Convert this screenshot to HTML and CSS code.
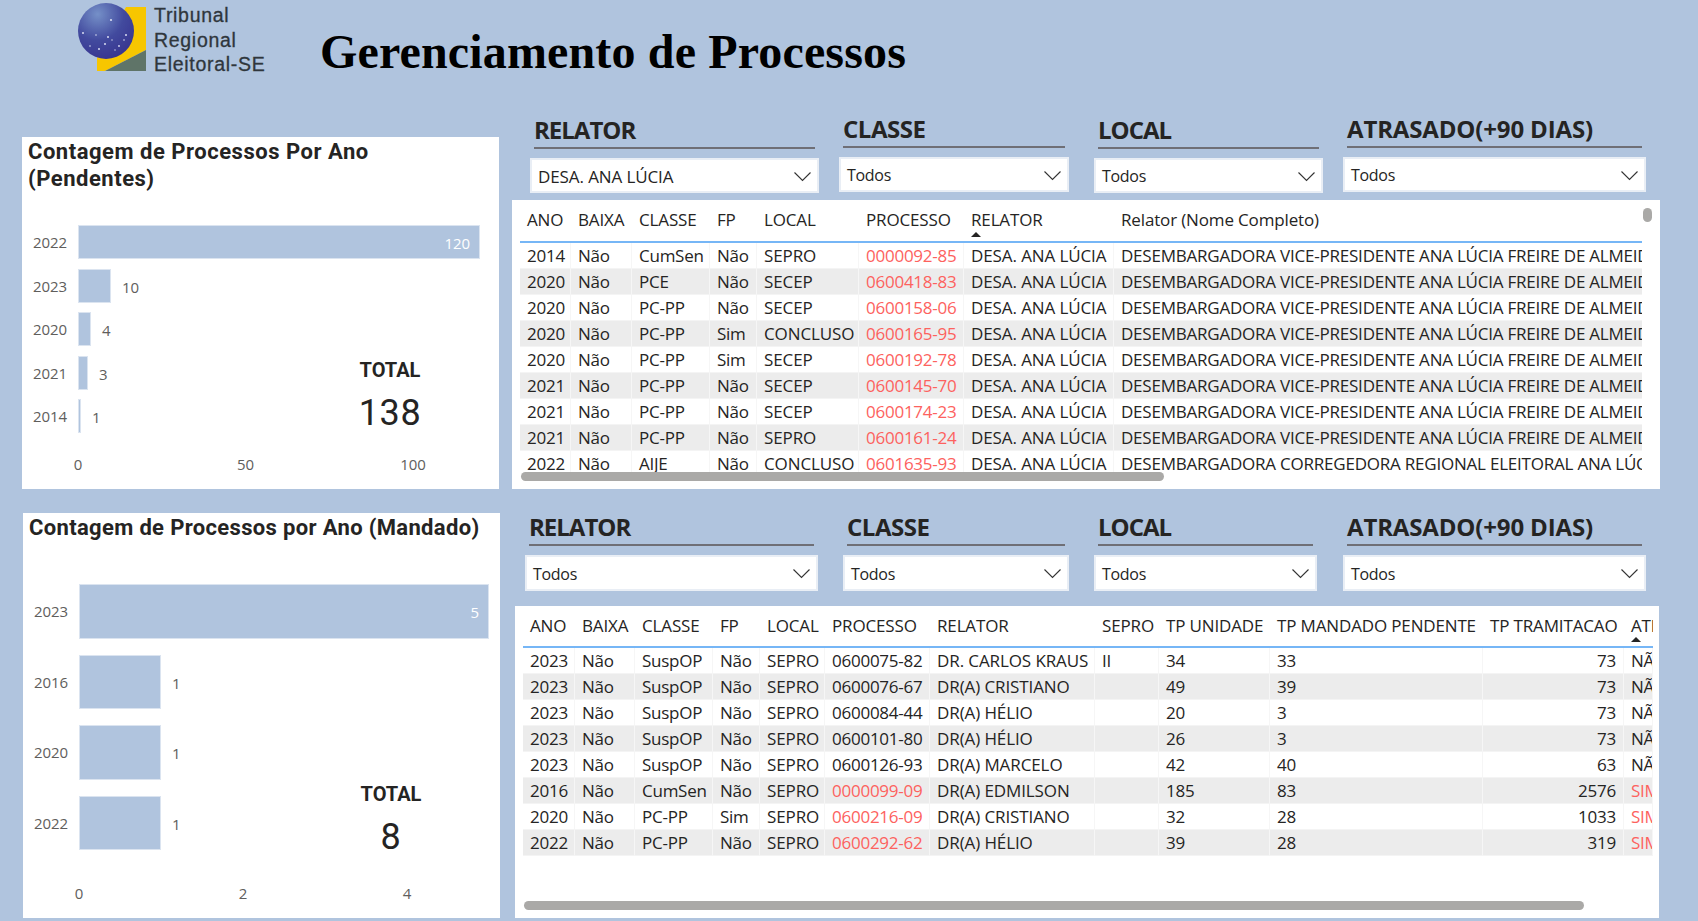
FILE: index.html
```html
<!DOCTYPE html>
<html lang="pt-BR">
<head>
<meta charset="utf-8">
<title>Gerenciamento de Processos</title>
<link rel="stylesheet" href="styles.css">
</head>
<body>
<header class="top">
  <svg class="logo-mark" viewBox="0 0 68 72" width="68" height="72" aria-hidden="true">
    <defs>
      <radialGradient id="globe" cx="0.35" cy="0.2" r="0.85">
        <stop offset="0" stop-color="#7590c8"/>
        <stop offset="0.55" stop-color="#424a9e"/>
        <stop offset="1" stop-color="#37348f"/>
      </radialGradient>
    </defs>
    <polygon points="48,7 68,7 68,50 27,71 19,71 19,58" fill="#f7c600"/>
    <polygon points="68,50 68,71 27,71" fill="#5f7468"/>
    <circle cx="28" cy="31" r="28" fill="url(#globe)"/>
    <g fill="#d9dcf2">
      <circle cx="33" cy="20" r="1.1"/><circle cx="5" cy="33" r="1"/><circle cx="18" cy="35" r="0.8"/>
      <circle cx="30" cy="37" r="1"/><circle cx="27" cy="44" r="1"/><circle cx="41" cy="46" r="0.9"/>
      <circle cx="48" cy="35" r="1"/><circle cx="46" cy="40" r="0.8"/><circle cx="21" cy="49" r="1"/>
      <circle cx="12" cy="46" r="0.8"/><circle cx="37" cy="50" r="0.7"/><circle cx="34" cy="40" r="0.7"/>
    </g>
  </svg>
  <div class="logo-text"><span>Tribunal</span><span>Regional</span><span>Eleitoral-SE</span></div>
  <h1 class="title">Gerenciamento de Processos</h1>
</header>

<main class="dash">
  <section class="chart chart-a">
    <h2 class="chart-title title-a">Contagem de Processos Por Ano (Pendentes)</h2>
    <div class="bars bars-a">
      <div class="bar-row"><span class="year">2022</span><div class="bar" style="width:402px"><span class="val-in">120</span></div></div>
      <div class="bar-row"><span class="year">2023</span><div class="bar" style="width:33px"></div><span class="val">10</span></div>
      <div class="bar-row"><span class="year">2020</span><div class="bar" style="width:13px"></div><span class="val">4</span></div>
      <div class="bar-row"><span class="year">2021</span><div class="bar" style="width:10px"></div><span class="val">3</span></div>
      <div class="bar-row"><span class="year">2014</span><div class="bar" style="width:3px"></div><span class="val">1</span></div>
    </div>
    <div class="axis axis-a"><span class="tick"><span>0</span></span><span class="tick"><span>50</span></span><span class="tick"><span>100</span></span></div>
    <div class="total total-a"><div class="total-label">TOTAL</div><div class="total-num">138</div></div>
  </section>

  <section class="work work-a">
    <div class="slicers">
      <div class="slicer w-a1"><div class="sl-head">RELATOR</div><div class="sl-box"><span class="caps">DESA. ANA LÚCIA</span><svg class="chev" viewBox="0 0 17 9"><path d="M0.5 0.5 L8.5 8.5 L16.5 0.5"/></svg></div></div>
      <div class="slicer w-a2 up"><div class="sl-head sl-mid">CLASSE</div><div class="sl-box"><span>Todos</span><svg class="chev" viewBox="0 0 17 9"><path d="M0.5 0.5 L8.5 8.5 L16.5 0.5"/></svg></div></div>
      <div class="slicer w-a3"><div class="sl-head">LOCAL</div><div class="sl-box"><span>Todos</span><svg class="chev" viewBox="0 0 17 9"><path d="M0.5 0.5 L8.5 8.5 L16.5 0.5"/></svg></div></div>
      <div class="slicer w-a4 up"><div class="sl-head sl-wide">ATRASADO(+90 DIAS)</div><div class="sl-box"><span>Todos</span><svg class="chev" viewBox="0 0 17 9"><path d="M0.5 0.5 L8.5 8.5 L16.5 0.5"/></svg></div></div>
    </div>
    <div class="table-panel panel-a">
      <div class="clip clip-a">
      <table class="grid grid-a">
        <colgroup><col><col><col><col><col><col><col><col></colgroup>
        <thead><tr><th>ANO</th><th>BAIXA</th><th>CLASSE</th><th>FP</th><th>LOCAL</th><th>PROCESSO</th><th class="sorted">RELATOR</th><th>Relator (Nome Completo)</th></tr></thead>
        <tbody>
          <tr><td>2014</td><td>Não</td><td>CumSen</td><td>Não</td><td>SEPRO</td><td class="red">0000092-85</td><td>DESA. ANA LÚCIA</td><td>DESEMBARGADORA VICE-PRESIDENTE ANA LÚCIA FREIRE DE ALMEIDA</td></tr>
          <tr><td>2020</td><td>Não</td><td>PCE</td><td>Não</td><td>SECEP</td><td class="red">0600418-83</td><td>DESA. ANA LÚCIA</td><td>DESEMBARGADORA VICE-PRESIDENTE ANA LÚCIA FREIRE DE ALMEIDA</td></tr>
          <tr><td>2020</td><td>Não</td><td>PC-PP</td><td>Não</td><td>SECEP</td><td class="red">0600158-06</td><td>DESA. ANA LÚCIA</td><td>DESEMBARGADORA VICE-PRESIDENTE ANA LÚCIA FREIRE DE ALMEIDA</td></tr>
          <tr><td>2020</td><td>Não</td><td>PC-PP</td><td>Sim</td><td>CONCLUSO</td><td class="red">0600165-95</td><td>DESA. ANA LÚCIA</td><td>DESEMBARGADORA VICE-PRESIDENTE ANA LÚCIA FREIRE DE ALMEIDA</td></tr>
          <tr><td>2020</td><td>Não</td><td>PC-PP</td><td>Sim</td><td>SECEP</td><td class="red">0600192-78</td><td>DESA. ANA LÚCIA</td><td>DESEMBARGADORA VICE-PRESIDENTE ANA LÚCIA FREIRE DE ALMEIDA</td></tr>
          <tr><td>2021</td><td>Não</td><td>PC-PP</td><td>Não</td><td>SECEP</td><td class="red">0600145-70</td><td>DESA. ANA LÚCIA</td><td>DESEMBARGADORA VICE-PRESIDENTE ANA LÚCIA FREIRE DE ALMEIDA</td></tr>
          <tr><td>2021</td><td>Não</td><td>PC-PP</td><td>Não</td><td>SECEP</td><td class="red">0600174-23</td><td>DESA. ANA LÚCIA</td><td>DESEMBARGADORA VICE-PRESIDENTE ANA LÚCIA FREIRE DE ALMEIDA</td></tr>
          <tr><td>2021</td><td>Não</td><td>PC-PP</td><td>Não</td><td>SEPRO</td><td class="red">0600161-24</td><td>DESA. ANA LÚCIA</td><td>DESEMBARGADORA VICE-PRESIDENTE ANA LÚCIA FREIRE DE ALMEIDA</td></tr>
          <tr><td>2022</td><td>Não</td><td>AIJE</td><td>Não</td><td>CONCLUSO</td><td class="red">0601635-93</td><td>DESA. ANA LÚCIA</td><td>DESEMBARGADORA CORREGEDORA REGIONAL ELEITORAL ANA LÚCIA FREIRE</td></tr>
        </tbody>
      </table>
      </div>
      <div class="hscroll hscroll-a"></div>
      <div class="vscroll"></div>
    </div>
  </section>

  <section class="chart chart-b">
    <h2 class="chart-title title-b">Contagem de Processos por Ano (Mandado)</h2>
    <div class="bars bars-b">
      <div class="bar-row"><span class="year">2023</span><div class="bar" style="width:410px"><span class="val-in">5</span></div></div>
      <div class="bar-row"><span class="year">2016</span><div class="bar" style="width:82px"></div><span class="val">1</span></div>
      <div class="bar-row"><span class="year">2020</span><div class="bar" style="width:82px"></div><span class="val">1</span></div>
      <div class="bar-row"><span class="year">2022</span><div class="bar" style="width:82px"></div><span class="val">1</span></div>
    </div>
    <div class="axis axis-b"><span class="tick"><span>0</span></span><span class="tick"><span>2</span></span><span class="tick"><span>4</span></span></div>
    <div class="total total-b"><div class="total-label">TOTAL</div><div class="total-num">8</div></div>
  </section>

  <section class="work work-b">
    <div class="slicers slicers-b">
      <div class="slicer w-b1"><div class="sl-head">RELATOR</div><div class="sl-box"><span>Todos</span><svg class="chev" viewBox="0 0 17 9"><path d="M0.5 0.5 L8.5 8.5 L16.5 0.5"/></svg></div></div>
      <div class="slicer w-b2"><div class="sl-head sl-mid">CLASSE</div><div class="sl-box"><span>Todos</span><svg class="chev" viewBox="0 0 17 9"><path d="M0.5 0.5 L8.5 8.5 L16.5 0.5"/></svg></div></div>
      <div class="slicer w-b3"><div class="sl-head">LOCAL</div><div class="sl-box"><span>Todos</span><svg class="chev" viewBox="0 0 17 9"><path d="M0.5 0.5 L8.5 8.5 L16.5 0.5"/></svg></div></div>
      <div class="slicer w-b4"><div class="sl-head sl-wide">ATRASADO(+90 DIAS)</div><div class="sl-box"><span>Todos</span><svg class="chev" viewBox="0 0 17 9"><path d="M0.5 0.5 L8.5 8.5 L16.5 0.5"/></svg></div></div>
    </div>
    <div class="table-panel panel-b">
      <div class="clip clip-b">
      <table class="grid grid-b">
        <colgroup><col><col><col><col><col><col><col><col><col><col><col><col></colgroup>
        <thead><tr><th>ANO</th><th>BAIXA</th><th>CLASSE</th><th>FP</th><th>LOCAL</th><th>PROCESSO</th><th>RELATOR</th><th>SEPRO</th><th>TP UNIDADE</th><th>TP MANDADO PENDENTE</th><th>TP TRAMITACAO</th><th class="sorted">ATI</th></tr></thead>
        <tbody>
          <tr><td>2023</td><td>Não</td><td>SuspOP</td><td>Não</td><td>SEPRO</td><td>0600075-82</td><td>DR. CARLOS KRAUS</td><td>II</td><td>34</td><td>33</td><td class="num">73</td><td>NÃO</td></tr>
          <tr><td>2023</td><td>Não</td><td>SuspOP</td><td>Não</td><td>SEPRO</td><td>0600076-67</td><td>DR(A) CRISTIANO</td><td></td><td>49</td><td>39</td><td class="num">73</td><td>NÃO</td></tr>
          <tr><td>2023</td><td>Não</td><td>SuspOP</td><td>Não</td><td>SEPRO</td><td>0600084-44</td><td>DR(A) HÉLIO</td><td></td><td>20</td><td>3</td><td class="num">73</td><td>NÃO</td></tr>
          <tr><td>2023</td><td>Não</td><td>SuspOP</td><td>Não</td><td>SEPRO</td><td>0600101-80</td><td>DR(A) HÉLIO</td><td></td><td>26</td><td>3</td><td class="num">73</td><td>NÃO</td></tr>
          <tr><td>2023</td><td>Não</td><td>SuspOP</td><td>Não</td><td>SEPRO</td><td>0600126-93</td><td>DR(A) MARCELO</td><td></td><td>42</td><td>40</td><td class="num">63</td><td>NÃO</td></tr>
          <tr><td>2016</td><td>Não</td><td>CumSen</td><td>Não</td><td>SEPRO</td><td class="red">0000099-09</td><td>DR(A) EDMILSON</td><td></td><td>185</td><td>83</td><td class="num">2576</td><td class="red">SIM</td></tr>
          <tr><td>2020</td><td>Não</td><td>PC-PP</td><td>Sim</td><td>SEPRO</td><td class="red">0600216-09</td><td>DR(A) CRISTIANO</td><td></td><td>32</td><td>28</td><td class="num">1033</td><td class="red">SIM</td></tr>
          <tr><td>2022</td><td>Não</td><td>PC-PP</td><td>Não</td><td>SEPRO</td><td class="red">0600292-62</td><td>DR(A) HÉLIO</td><td></td><td>39</td><td>28</td><td class="num">319</td><td class="red">SIM</td></tr>
        </tbody>
      </table>
      </div>
      <div class="hscroll hscroll-b"></div>
    </div>
  </section>
</main>
</body>
</html>
```
FILE: styles.css
```css
* { box-sizing: border-box; }
html, body { margin: 0; padding: 0; }
body {
  width: 1698px;
  height: 921px;
  overflow: hidden;
  background: #b0c4de;
  color: #252423;
  font-family: "Open Sans", "Noto Sans", sans-serif;
}

/* header */
.top {
  display: flex;
  align-items: flex-start;
  height: 108px;
  padding-left: 78px;
}
.logo-mark { flex: none; overflow: visible; filter: blur(0.4px); }
.logo-text {
  display: flex;
  flex-direction: column;
  width: 112px;
  margin-left: 8px;
  margin-top: 3px;
  font-family: "Liberation Sans", Arial, sans-serif;
  font-size: 19.5px;
  line-height: 24.5px;
  letter-spacing: 0.7px;
  color: #2f363c;
  -webkit-text-stroke: 0.3px #2f363c;
  white-space: nowrap;
}
.title {
  margin: 24px 0 0 54px;
  font-family: "Liberation Serif", "Times New Roman", serif;
  font-size: 48px;
  line-height: 56px;
  font-weight: 700;
  letter-spacing: 0.15px;
  color: #000;
  white-space: nowrap;
}

/* layout */
.dash {
  display: grid;
  grid-template-columns: 490px 1148px;
  grid-template-rows: 381px 432px;
  padding-left: 22px;
}
.chart {
  position: relative;
  background: #fff;
  width: 477px;
}
.chart-a { margin-top: 29px; height: 352px; }
.chart-b { margin-top: 24px; margin-left: 1px; height: 405px; }
.chart-title {
  margin: 0;
  font-family: Roboto, "Noto Sans", sans-serif;
  font-weight: 700;
  font-size: 22px;
  line-height: 27px;
  color: #252423;
}
.title-a { height: 88px; padding: 1px 90px 0 6px; letter-spacing: 0.52px; }
.title-b { height: 71px; padding: 1px 0 0 6px; letter-spacing: 0.34px; white-space: nowrap; }
.bars { display: flex; flex-direction: column; }
.bars-a { gap: 9.5px; }
.bars-a .bar { height: 34px; }
.bars-b { gap: 16px; }
.bars-b .bar { height: 54.5px; }
.bar-row {
  display: flex;
  align-items: center;
  font-size: 15px;
  letter-spacing: -0.1px;
  color: #605e5c;
}
.year { width: 56px; padding-left: 11px; flex: none; }
.bar {
  display: flex;
  align-items: center;
  justify-content: flex-end;
  flex: none;
  background: #b0c4de;
  border: 1px solid #dbe4f0;
}
.val { margin-left: 11px; padding-top: 2px; }
.val-in { color: #fff; margin-right: 9px; padding-top: 2px; }
.axis {
  display: flex;
  justify-content: space-between;
  font-size: 15px;
  letter-spacing: -0.1px;
  color: #605e5c;
  padding-left: 56px;
}
.axis-a { width: 391px; margin-top: 21px; }
.axis-b { width: 384px; margin-top: 33px; }
.tick { width: 0; display: flex; justify-content: center; white-space: nowrap; }
.total {
  position: absolute;
  left: 308px;
  width: 120px;
  text-align: center;
}
.total-a { top: 219px; }
.total-b { top: 267px; }
.total-label {
  font-family: Roboto, "Noto Sans", sans-serif;
  font-weight: 700;
  font-size: 20px;
  line-height: 28px;
}
.total-num {
  font-family: Roboto, "Noto Sans", sans-serif;
  font-size: 36px;
  line-height: 44px;
  margin-top: 7px;
  letter-spacing: 0.6px;
}

/* slicers */
.slicers { display: flex; padding-left: 18px; }
.slicers-b { padding-left: 13px; padding-top: 16px; }
.slicer { flex: none; }
.up { margin-top: -1px; }
.w-a1 { width: 289px; margin-right: 20px; }
.w-a2 { width: 230px; margin-right: 25px; }
.w-a3 { width: 229px; margin-right: 20px; }
.w-a4 { width: 303px; }
.w-b1 { width: 293px; margin-right: 25px; }
.w-b2 { width: 226px; margin-right: 25px; }
.w-b3 { width: 223px; margin-right: 26px; }
.w-b4 { width: 303px; }
.sl-head {
  height: 41px;
  margin: 0 4px;
  border-bottom: 2px solid #6f6f76;
  font-size: 24px;
  line-height: 43px;
  font-weight: 700;
  letter-spacing: -1px;
  color: #252423;
  white-space: nowrap;
}
.sl-mid { letter-spacing: -0.45px; }
.sl-wide { letter-spacing: -0.15px; }
.sl-box {
  display: flex;
  align-items: center;
  justify-content: space-between;
  height: 35px;
  margin-top: 9px;
  padding: 1px 6px 0 6px;
  background: #fff;
  border: 2px solid #e9eef5;
  font-size: 16px;
  letter-spacing: -0.3px;
  color: #252423;
}
.sl-box .caps { font-size: 17px; letter-spacing: -0.1px; }
.slicers-b .sl-box { height: 36px; margin-top: 9px; }
.chev { width: 17px; height: 9px; flex: none; overflow: visible; }
.chev path { fill: none; stroke: #333; stroke-width: 1.1; }

/* tables */
.table-panel { position: relative; background: #fff; width: 1148px; }
.panel-a { margin-top: 7px; height: 289px; padding-left: 8px; }
.panel-b { margin-top: 15px; height: 312px; width: 1144px; margin-left: 3px; padding-left: 8px; }
.clip { overflow: hidden; }
.clip-a { width: 1122px; height: 272px; }
.clip-b { width: 1130px; height: 260px; }
.grid {
  border-collapse: separate;
  border-spacing: 0;
  table-layout: fixed;
  font-size: 17px;
  letter-spacing: -0.25px;
  color: #252423;
}
.grid-a { width: 1122px; }
.grid-b { width: 1130px; }
.grid-a col:nth-child(1) { width: 51px; }
.grid-a col:nth-child(2) { width: 61px; }
.grid-a col:nth-child(3) { width: 78px; }
.grid-a col:nth-child(4) { width: 47px; }
.grid-a col:nth-child(5) { width: 102px; }
.grid-a col:nth-child(6) { width: 105px; }
.grid-a col:nth-child(7) { width: 150px; }
.grid-a col:nth-child(8) { width: 528px; }
.grid-b col:nth-child(1) { width: 52px; }
.grid-b col:nth-child(2) { width: 60px; }
.grid-b col:nth-child(3) { width: 78px; }
.grid-b col:nth-child(4) { width: 47px; }
.grid-b col:nth-child(5) { width: 65px; }
.grid-b col:nth-child(6) { width: 105px; }
.grid-b col:nth-child(7) { width: 165px; }
.grid-b col:nth-child(8) { width: 64px; }
.grid-b col:nth-child(9) { width: 111px; }
.grid-b col:nth-child(10) { width: 213px; }
.grid-b col:nth-child(11) { width: 141px; }
.grid-b col:nth-child(12) { width: 29px; }
th, td {
  padding: 0 0 0 7px;
  overflow: hidden;
  white-space: nowrap;
  text-align: left;
  font-weight: 400;
}
th {
  position: relative;
  height: 43px;
  padding-bottom: 2px;
  letter-spacing: -0.15px;
  border-bottom: 2px solid #76b6f6;
}
.grid-b th { height: 42px; }
td {
  height: 26px;
  line-height: 25px;
  border-bottom: 1px solid #f4f4f4;
  border-right: 1px solid #f6f6f6;
}
.grid-a td:nth-child(7), .grid-a td:nth-child(5),
.grid-b td:nth-child(7), .grid-b td:nth-child(5) { letter-spacing: -0.1px; }
.grid-a td:nth-child(8) { letter-spacing: -0.22px; border-right: 0; }
tbody tr:first-child td { height: 25px; }
tbody tr:nth-child(even) td { background: #ececec; }
td.red { color: #fd625e; }
td.num { text-align: right; padding-right: 7px; }
.sorted::after {
  content: "";
  position: absolute;
  left: 7px;
  bottom: 4px;
  border-left: 5.5px solid transparent;
  border-right: 5.5px solid transparent;
  border-bottom: 5px solid #252423;
}
.hscroll {
  position: absolute;
  height: 9px;
  border-radius: 5px;
  background: #aaa9a7;
}
.hscroll-a { left: 9px; top: 272px; width: 643px; }
.hscroll-b { left: 9px; top: 295px; width: 1060px; }
.vscroll {
  position: absolute;
  left: 1131px;
  top: 8px;
  width: 9px;
  height: 14px;
  border-radius: 5px;
  background: #aaa9a7;
}
```
